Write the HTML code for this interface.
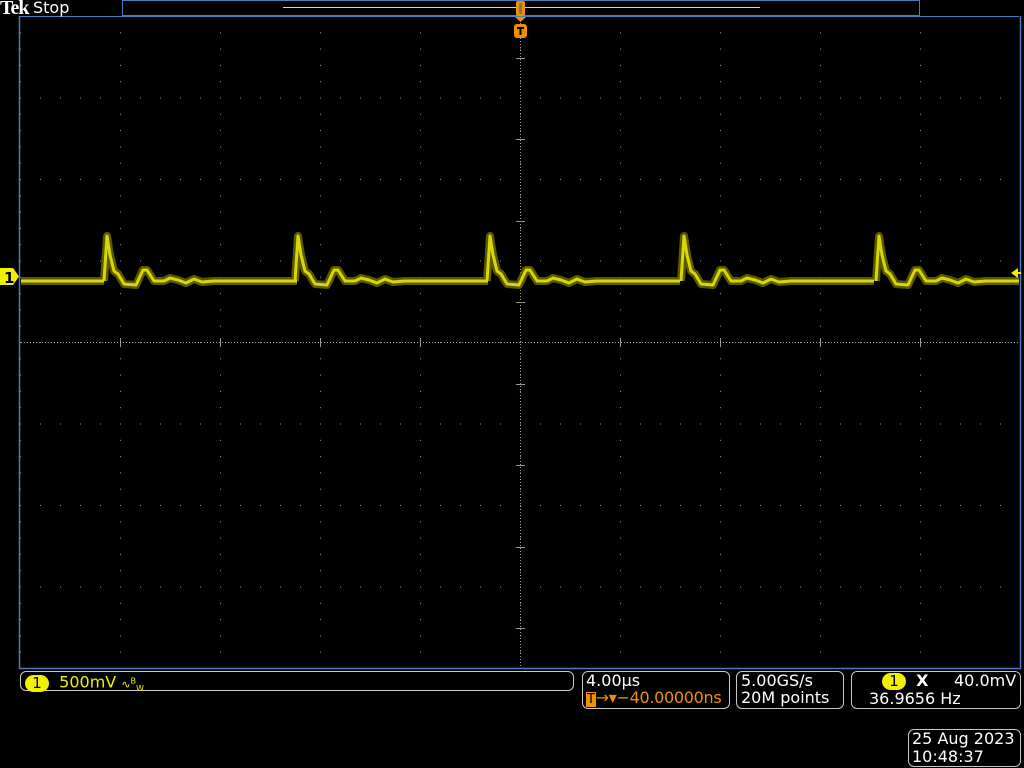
<!DOCTYPE html>
<html><head><meta charset="utf-8"><style>
html,body{margin:0;padding:0;background:#000;width:1024px;height:768px;overflow:hidden;position:relative;font-family:"DejaVu Sans","Liberation Sans",sans-serif;}
.t{position:absolute;white-space:nowrap;font-size:16px;line-height:18px;}
.box{position:absolute;border:1px solid #c8c8c8;border-radius:6px;box-sizing:border-box;}
.badge{display:inline-block;background:#f0f000;color:#000;border-radius:9px;width:24px;height:17px;text-align:center;font-size:15px;line-height:17px;}
</style></head><body>
<svg width="1024" height="768" style="position:absolute;left:0;top:0">
<defs>
<pattern id="vd" x="20" y="16" width="100" height="16.3" patternUnits="userSpaceOnUse"><rect x="0" y="0" width="1" height="1" fill="#9a9a8a"/></pattern>
<pattern id="hd" x="20" y="16" width="20" height="81.5" patternUnits="userSpaceOnUse"><rect x="0" y="0" width="1" height="1" fill="#9a9a8a"/></pattern>
<pattern id="cx" x="0" y="0" width="3" height="3" patternUnits="userSpaceOnUse"><rect width="1" height="1" fill="#a8a290"/></pattern>
<pattern id="cy" x="520" y="17" width="3" height="3" patternUnits="userSpaceOnUse"><rect width="1" height="1" fill="#a8a290"/></pattern>
</defs>
<rect x="20" y="16" width="1000" height="652" fill="url(#vd)"/>
<rect x="20" y="16" width="1000" height="652" fill="url(#hd)"/>
<rect x="21" y="342" width="999" height="1" fill="url(#cx)"/>
<rect x="520" y="17" width="1" height="651" fill="url(#cy)"/>
<g fill="#9a9a8a">
<rect x="516" y="58" width="9" height="1"/><rect x="516" y="139" width="9" height="1"/><rect x="516" y="221" width="9" height="1"/><rect x="516" y="302" width="9" height="1"/><rect x="516" y="384" width="9" height="1"/><rect x="516" y="465" width="9" height="1"/><rect x="516" y="547" width="9" height="1"/><rect x="516" y="628" width="9" height="1"/>
<rect x="120" y="338" width="1" height="9"/><rect x="220" y="338" width="1" height="9"/><rect x="320" y="338" width="1" height="9"/><rect x="420" y="338" width="1" height="9"/><rect x="620" y="338" width="1" height="9"/><rect x="720" y="338" width="1" height="9"/><rect x="820" y="338" width="1" height="9"/><rect x="920" y="338" width="1" height="9"/>
</g>
<path d="M19.5 16 V668.5 H1020.5 V16" fill="none" stroke="#4a7cc0" stroke-width="1.5"/>
<line x1="19" y1="16.5" x2="1021" y2="16.5" stroke="#4a7cc0"/>
<rect x="122.5" y="0.5" width="797" height="15" fill="none" stroke="#4a7cc0"/>
<line x1="283" y1="7.5" x2="760" y2="7.5" stroke="#f0f000"/>
<rect x="516" y="1" width="9" height="15" rx="2" fill="#f09000"/><rect x="519" y="3" width="3" height="11" fill="#777"/>
<path d="M515 17 H526 L520.5 22 Z" fill="#f09000"/>
<rect x="514" y="24" width="13" height="14" rx="3" fill="#f09000"/>
<path d="M517 27 H524 V29 H521.5 V35 H519.5 V29 H517Z" fill="#000"/>
<defs>
<path id="p" d="M0 0 L3 -45 L6 -26 L10 -10 L14 -7 L20 3 L32 4 L39 -11 L43 -11 L50 0 L60 0 L66 -3 L74 -1 L82 2 L90 -2 L98 1 L110 0 L150 0 L193 0"/>
</defs>
<g fill="none" stroke-linejoin="round">
<line x1="21" y1="281" x2="104" y2="281" stroke="#5a5900" stroke-width="8"/>
<g stroke="#5a5900" stroke-width="8">
<use href="#p" transform="translate(104,281)"/><use href="#p" transform="translate(295,281)"/><use href="#p" transform="translate(487,281)"/><use href="#p" transform="translate(681,281)"/><use href="#p" transform="translate(876,281)"/>
</g>
<line x1="21" y1="281" x2="104" y2="281" stroke="#d8d800" stroke-width="3"/>
<g stroke="#d8d800" stroke-width="3">
<use href="#p" transform="translate(104,281)"/><use href="#p" transform="translate(295,281)"/><use href="#p" transform="translate(487,281)"/><use href="#p" transform="translate(681,281)"/><use href="#p" transform="translate(876,281)"/>
</g>
</g>
<rect x="1019" y="0" width="5" height="668" fill="#000"/>
<line x1="1020.5" y1="16" x2="1020.5" y2="668" stroke="#4a7cc0" stroke-width="1.5"/>
<path d="M0 268 H13 L19 276.5 L13 285 H0Z" fill="#f0f000"/>
<text x="4" y="283" font-size="15" font-weight="bold" font-family="DejaVu Sans" fill="#000">1</text>
<path d="M1011 273 L1018 268 V278Z" fill="#f0f000"/><line x1="1016" y1="273" x2="1021" y2="273" stroke="#f0f000" stroke-width="2"/>
</svg>
<div class="t" style="left:0;top:-2px;font-family:'Liberation Serif',serif;font-weight:bold;font-size:20px;line-height:20px;color:#fff;letter-spacing:-1px">Tek</div>
<div class="t" style="left:33px;top:-1px;color:#fff;font-size:16px">Stop</div>
<div class="box" style="left:20px;top:671px;width:554px;height:20px"></div>
<div class="t" style="left:25px;top:672px;color:#f0f000"><span class="badge">1</span>&nbsp;&nbsp;500mV <span style="font-size:11px">∿<sup style="font-size:8px">B</sup><sub style="font-size:8px">W</sub></span></div>
<div class="box" style="left:582px;top:671px;width:148px;height:38px"></div>
<div class="t" style="left:586px;top:672px;color:#fff">4.00µs</div>
<div class="t" style="left:586px;top:689px;color:#f09000;letter-spacing:-0.3px"><span style="background:#f09000;color:#000;font-size:13px;padding:0 1px">T</span>→▾−40.00000ns</div>
<div class="box" style="left:736px;top:671px;width:108px;height:38px"></div>
<div class="t" style="left:741px;top:672px;color:#fff">5.00GS/s</div>
<div class="t" style="left:741px;top:689px;color:#fff">20M points</div>
<div class="box" style="left:851px;top:671px;width:170px;height:38px"></div>
<div class="t" style="left:882px;top:672px;color:#fff"><span class="badge">1</span>&nbsp;&nbsp;<b>X</b></div>
<div class="t" style="left:954px;top:672px;color:#fff">40.0mV</div>
<div class="t" style="left:869px;top:690px;color:#fff">36.9656 Hz</div>
<div class="box" style="left:908px;top:729px;width:113px;height:38px"></div>
<div class="t" style="left:912px;top:730px;color:#fff">25 Aug 2023</div>
<div class="t" style="left:912px;top:748px;color:#fff">10:48:37</div>
</body></html>
